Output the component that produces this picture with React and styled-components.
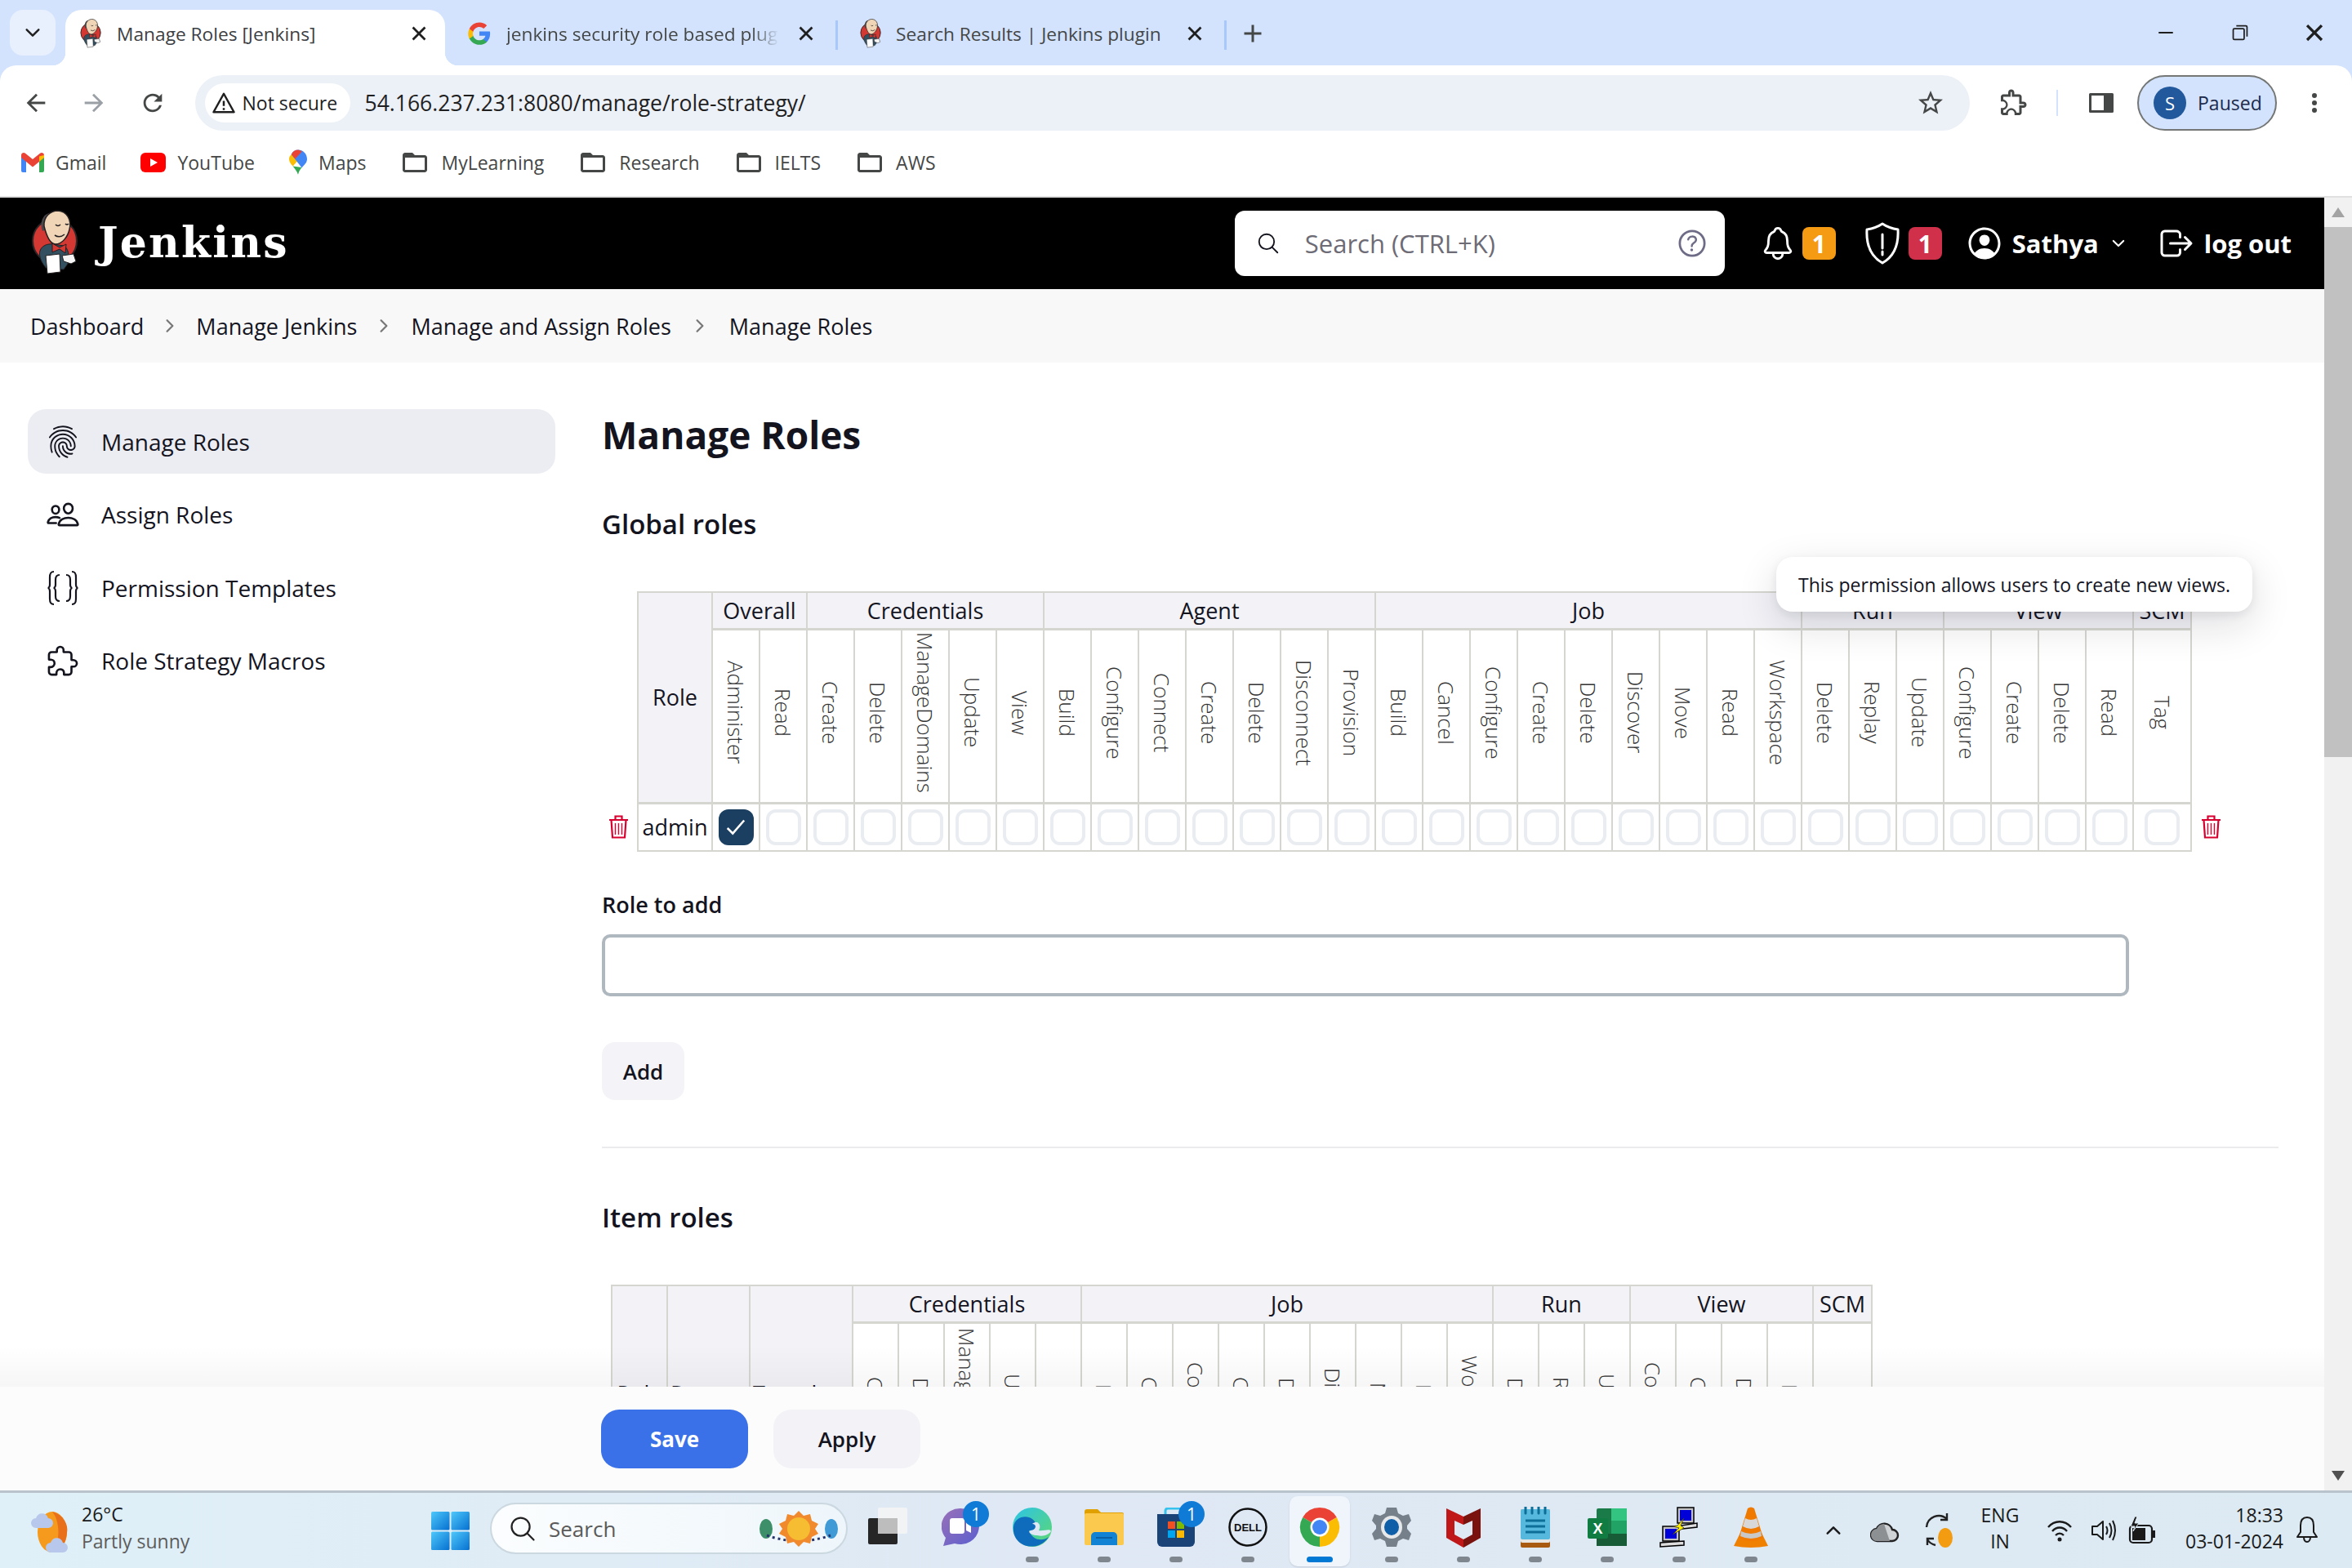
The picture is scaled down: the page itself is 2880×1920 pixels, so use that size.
import React from "react";
import styled, { createGlobalStyle } from "styled-components";
import {
  IoNotificationsOutline,
  IoPersonCircleOutline,
  IoLogOutOutline,
  IoFingerPrintOutline,
  IoPeopleOutline,
  IoExtensionPuzzleOutline,
  IoSearchOutline,
  IoHelpCircleOutline,
  IoChevronDownOutline,
  IoChevronForwardOutline,
  IoCheckmarkSharp,
  IoCloseSharp,
} from "react-icons/io5";

const UI = `"Open Sans", "Noto Sans", sans-serif`;

const GlobalStyle = createGlobalStyle`
   html, body {
      margin: 0;
      padding: 0;
      background: #fff;
      font-family: ${UI};
      color: #14141f;
   }
   * { box-sizing: border-box; }
`;

const Shell = styled.div`
   width: 2880px;
   height: 1920px;
   display: flex;
   flex-direction: column;
   overflow: hidden;
`;

/* browser chrome */
const ChromeTop = styled.div`
   background: #d3e3fd;
`;

const TabStrip = styled.div`
   height: 80px;
   display: flex;
   align-items: flex-end;
`;

const TabListBtn = styled.div`
   width: 56px;
   height: 56px;
   margin: 0 12px 12px 12px;
   border-radius: 16px;
   background: #e8f0fe;
   display: flex;
   align-items: center;
   justify-content: center;
   color: #1f1f1f;
`;

const ActiveTab = styled.div`
   position: relative;
   width: 465px;
   height: 68px;
   background: #fff;
   border-radius: 20px 20px 0 0;
   display: flex;
   align-items: center;
   padding: 0 13px 10px 18px;
   gap: 19px;
   font-size: 22.7px;
   color: #3c4043;
   &::before,
   &::after {
      content: "";
      position: absolute;
      bottom: 0;
      width: 16px;
      height: 16px;
   }
   &::before {
      left: -16px;
      background: radial-gradient(circle at 0 0, #d3e3fd 16px, #fff 16.5px);
   }
   &::after {
      right: -16px;
      background: radial-gradient(circle at 100% 0, #d3e3fd 16px, #fff 16.5px);
   }
`;

const Tab = styled.div`
   width: ${(p) => p.$w}px;
   height: 68px;
   display: flex;
   align-items: center;
   padding: 0 17px 10px 27px;
   gap: 18px;
   font-size: 22.7px;
   color: #444746;
   border-right: 3px solid #a8c7fa;
   border-image: linear-gradient(transparent 20%, #a8c7fa 20%, #a8c7fa 72%, transparent 72%) 1;
`;

const TabTitle = styled.span`
   flex: 1;
   white-space: nowrap;
   overflow: hidden;
   -webkit-mask-image: ${(p) => (p.$fade ? "linear-gradient(90deg, #000 90%, transparent)" : "none")};
`;

const TabClose = styled.span`
   display: flex;
   color: #1f1f1f;
   font-size: 30px;
   margin-right: 4px;
`;

const NewTab = styled.span`
   display: flex;
   align-items: center;
   height: 68px;
   padding-bottom: 10px;
   margin-left: 14px;
   color: #444746;
`;

const WindowBtns = styled.div`
   margin-left: auto;
   margin-right: 1px;
   height: 80px;
   display: flex;
   align-items: center;
   color: #1f1f1f;
`;

const WindowBtn = styled.span`
   width: 91px;
   display: flex;
   justify-content: center;
   align-items: center;
`;

const Toolbar = styled.div`
   height: 80px;
   background: #fff;
   border-radius: 20px 20px 0 0;
   display: flex;
   align-items: flex-end;
   padding-left: 8px;
`;

const NavBtn = styled.span`
   width: 72px;
   height: 68px;
   display: flex;
   align-items: center;
   justify-content: center;
`;

const Omnibox = styled.div`
   width: 2188px;
   height: 68px;
   margin-left: 16px;
   background: #ecf0f7;
   border-radius: 34px;
   display: flex;
   align-items: center;
   padding: 0 30px 0 12px;
`;

const SecureChip = styled.div`
   width: 178px;
   height: 48px;
   background: #fff;
   border-radius: 24px;
   display: flex;
   align-items: center;
   gap: 8px;
   padding-left: 8px;
   font-size: 23px;
   font-weight: 500;
   color: #1f1f1f;
   white-space: nowrap;
`;

const Url = styled.span`
   margin-left: 18px;
   font-size: 26.5px;
   color: #1f1f1f;
   flex: 1;
   white-space: nowrap;
`;

const ToolIcons = styled.div`
   display: flex;
   align-items: center;
   height: 68px;
`;

const ToolIcon = styled.span`
   width: ${(p) => p.$w}px;
   display: flex;
   justify-content: center;
   align-items: center;
`;

const ToolSep = styled.span`
   width: 2px;
   height: 32px;
   background: #d3e3fd;
`;

const ProfilePill = styled.div`
   width: 172px;
   height: 68px;
   margin-left: -9px;
   border-radius: 34px;
   border: 2px solid #747775;
   background: #d3e3fd;
   display: flex;
   align-items: center;
   gap: 14px;
   padding-left: 18px;
   font-size: 23px;
   color: #1b2a4a;
`;

const Avatar = styled.span`
   width: 40px;
   height: 40px;
   border-radius: 50%;
   background: #22589c;
   color: #fff;
   font-size: 22px;
   display: flex;
   align-items: center;
   justify-content: center;
`;

const Bookmarks = styled.div`
   height: 82px;
   background: #fff;
   border-bottom: 2px solid #e0e0e0;
   display: flex;
   align-items: center;
   padding: 0 0 3px 26px;
   gap: 42px;
`;

const Bookmark = styled.div`
   display: flex;
   align-items: center;
   gap: 14px;
   font-size: 23px;
   color: #444746;
`;

/* page area */
const Viewport = styled.div`
   flex: 1;
   min-height: 0;
   display: flex;
   background: #fff;
`;

const Page = styled.div`
   position: relative;
   flex: 1;
   min-width: 0;
   overflow: hidden;
`;

const Scrollbar = styled.div`
   width: 34px;
   background: #f1f1f1;
   display: flex;
   flex-direction: column;
   align-items: center;
`;

const ScrollArrow = styled.span`
   width: 0;
   height: 0;
   border-left: 8px solid transparent;
   border-right: 8px solid transparent;
   margin: 12px 0;
   border-bottom: ${(p) => (p.$down ? "none" : "12px solid #a3a3a3")};
   border-top: ${(p) => (p.$down ? "12px solid #505050" : "none")};
`;

const ScrollThumb = styled.div`
   width: 100%;
   height: 649px;
   background: #c1c1c1;
`;

const ScrollRest = styled.div`
   flex: 1;
`;

const JenkinsBar = styled.header`
   height: 112px;
   background: #000;
   display: flex;
   align-items: center;
   padding: 0 40px 0 38px;
   color: #fff;
`;

const Brand = styled.div`
   display: flex;
   align-items: center;
   gap: 24px;
   font-family: "DejaVu Serif", "Liberation Serif", serif;
   font-weight: 700;
   font-size: 52px;
   line-height: 60px;
   letter-spacing: 2.2px;
   padding-bottom: 3px;
`;

const SearchBox = styled.div`
   margin-left: auto;
   width: 600px;
   height: 80px;
   border-radius: 12px;
   background: #fff;
   display: flex;
   align-items: center;
   padding: 0 18px 0 26px;
   color: #14141f;
`;

const SearchText = styled.span`
   flex: 1;
   margin-left: 30px;
   font-size: 31px;
   color: #6d6b75;
`;

const HeaderGroup = styled.div`
   display: flex;
   align-items: center;
   margin-left: ${(p) => p.$ml}px;
   gap: ${(p) => p.$gap || 10}px;
   font-size: 31px;
   font-weight: 700;
   white-space: nowrap;
`;

const ChevronSlot = styled.span`
   display: flex;
   margin-left: 3px;
`;

const CountBadge = styled.span`
   width: 41px;
   height: 40px;
   border-radius: 8px;
   background: ${(p) => p.$bg};
   display: flex;
   align-items: center;
   justify-content: center;
   font-size: 30px;
   font-weight: 700;
   color: #fff;
`;

const Breadcrumbs = styled.nav`
   height: 90px;
   background: #f8f8f8;
   display: flex;
   align-items: center;
   padding-left: 37px;
   font-size: 27px;
   font-weight: 500;
`;

const CrumbSep = styled.span`
   width: ${(p) => p.$w}px;
   display: flex;
   justify-content: center;
   color: #777;
`;

const Body = styled.div`
   display: flex;
   padding: 57px 0 0 34px;
`;

const Sidebar = styled.aside`
   width: 646px;
   flex-shrink: 0;
   display: flex;
   flex-direction: column;
   gap: 10.5px;
`;

const SideItem = styled.div`
   height: 79px;
   border-radius: 22px;
   display: flex;
   align-items: center;
   gap: 26px;
   padding-left: 22px;
   font-size: 28px;
   font-weight: 500;
   background: ${(p) => (p.$active ? "#ecedf2" : "transparent")};
`;

const Main = styled.main`
   margin-left: 57px;
   width: 2053px;
`;

const Title = styled.h1`
   margin: 0;
   font-size: 46px;
   line-height: 62px;
   font-weight: 700;
`;

const SectionTitle = styled.h2`
   margin: ${(p) => p.$mt}px 0 0;
   font-size: 33px;
   line-height: 48px;
   font-weight: 600;
`;

const RoleTable = styled.table`
   margin: 58px 0 0 ${(p) => p.$left || 0}px;
   border-collapse: collapse;
   table-layout: fixed;
   font-size: 27px;
`;

const GroupCell = styled.th`
   height: 45px;
   padding: 0;
   background: #f2f2f7;
   border: 2px solid #d6d6d0;
   font-weight: 400;
   white-space: nowrap;
   overflow: hidden;
`;

const PermCell = styled.th`
   height: ${(p) => p.$h}px;
   padding: 0;
   background: #fff;
   border: 2px solid #d6d6d0;
   border-top-width: 3px;
   font-weight: 300;
   vertical-align: middle;
`;

const PermLabel = styled.span`
   display: inline-block;
   writing-mode: vertical-rl;
   white-space: nowrap;
   font-size: 26px;
   line-height: 30px;
   color: #333;
`;

const NoBorderCell = styled.td`
   padding: 0;
   border: none;
`;

const NameCell = styled.td`
   height: 59px;
   padding: 0;
   text-align: center;
   border: 2px solid #d6d6d0;
   border-top-width: 3px;
   font-size: 27px;
`;

const CheckCell = styled.td`
   height: 59px;
   padding: 0;
   border: 2px solid #d6d6d0;
   border-top-width: 3px;
`;

const Checkbox = styled.span`
   display: flex;
   align-items: center;
   justify-content: center;
   width: 43px;
   height: 44px;
   margin: 0 auto;
   border-radius: 12px;
   border: ${(p) => (p.$checked ? "none" : "4px solid #e9ecf0")};
   background: ${(p) => (p.$checked ? "#1b3f60" : "#fff")};
   color: #fff;
`;

const TrashWrap = styled.span`
   display: flex;
   padding-left: ${(p) => (p.$right ? 11 : 8)}px;
`;

const FieldLabel = styled.label`
   display: block;
   margin-top: 46px;
   font-size: 27px;
   line-height: 38px;
   font-weight: 600;
`;

const TextInput = styled.input`
   display: block;
   width: 1870px;
   height: 76px;
   margin-top: 17px;
   border: 4px solid #b0b8bf;
   border-radius: 10px;
   background: #fff;
   outline: none;
`;

const AddButton = styled.button`
   display: block;
   width: 101px;
   height: 71px;
   margin-top: 56px;
   border: none;
   border-radius: 16px;
   background: #f4f4f8;
   font: 600 26px ${UI};
   color: #14141f;
`;

const Divider = styled.hr`
   margin: 57px 0 0;
   border: none;
   height: 2px;
   background: #ebebee;
`;

const Tooltip = styled.div`
   position: absolute;
   left: 2175px;
   top: 440px;
   width: 583px;
   height: 67px;
   display: flex;
   align-items: center;
   justify-content: center;
   background: #fff;
   border-radius: 20px;
   box-shadow: 0 4px 12px rgba(20, 20, 40, 0.08), 0 16px 50px rgba(20, 20, 40, 0.14);
   font-size: 23px;
   white-space: nowrap;
`;

const SaveBar = styled.div`
   position: absolute;
   left: 0;
   right: 0;
   bottom: 0;
   height: 127px;
   padding: 28px 0 0 736px;
   display: flex;
   gap: 31px;
   background: #fcfcfc;
   &::before {
      content: "";
      position: absolute;
      left: 0;
      right: 0;
      top: -50px;
      height: 50px;
      background: linear-gradient(rgba(0, 0, 0, 0), rgba(0, 0, 0, 0.035));
   }
`;

const BarButton = styled.button`
   width: 180px;
   height: 72px;
   border: none;
   border-radius: 22px;
   background: ${(p) => (p.$primary ? "#3a70e8" : "#f3f3f7")};
   color: ${(p) => (p.$primary ? "#fff" : "#14141f")};
   font: ${(p) => (p.$primary ? 700 : 600)} 26px ${UI};
`;

/* taskbar */
const Taskbar = styled.footer`
   height: 95px;
   flex-shrink: 0;
   border-top: 3px solid #b8c3cb;
   background: linear-gradient(90deg, #dff0f8, #dfe8f4 45%, #dceaf3);
   display: flex;
   align-items: center;
`;

const Weather = styled.div`
   width: 528px;
   flex-shrink: 0;
   padding-left: 38px;
   display: flex;
   align-items: center;
   gap: 14px;
`;

const WeatherText = styled.div`
   font-size: 23px;
   line-height: 33px;
   margin-bottom: 6px;
   color: #1a1a1a;
`;

const WeatherSub = styled.div`
   color: #5c5c5c;
`;

const TaskSearch = styled.div`
   width: 438px;
   height: 63px;
   margin: 0 0 5px 25px;
   border-radius: 32px;
   background: linear-gradient(90deg, #fbfdfe, #eef6fb);
   border: 2px solid #cbd8e0;
   display: flex;
   align-items: center;
   padding: 0 8px 0 20px;
   gap: 14px;
   font-size: 26px;
   color: #5a5a5a;
`;

const TaskSearchText = styled.span`
   flex: 1;
`;

const TaskIcons = styled.div`
   margin-left: 6px;
   display: flex;
   flex-shrink: 0;
`;

const TaskIcon = styled.div`
   position: relative;
   width: 88px;
   height: 92px;
   display: flex;
   align-items: center;
   justify-content: center;
   padding-bottom: 8px;
   &::before {
      content: "";
      position: absolute;
      inset: 4px 7px 2px;
      border-radius: 10px;
      background: ${(p) => (p.$active ? "#f0f5fb" : "transparent")};
      box-shadow: ${(p) => (p.$active ? "0 1px 2px rgba(0,0,0,.12)" : "none")};
   }
   &::after {
      content: "";
      display: ${(p) => (p.$dot || p.$active ? "block" : "none")};
      position: absolute;
      bottom: 7px;
      left: 50%;
      transform: translateX(-50%);
      width: ${(p) => (p.$active ? 32 : 16)}px;
      height: 7px;
      border-radius: 4px;
      background: ${(p) => (p.$active ? "#0078d4" : "#7f868e")};
   }
   & > svg {
      position: relative;
   }
`;

const TaskBadge = styled.span`
   position: absolute;
   top: 10px;
   left: 47px;
   width: 32px;
   height: 32px;
   border-radius: 50%;
   background: #0f7bd6;
   color: #fff;
   font-size: 21px;
   display: flex;
   align-items: center;
   justify-content: center;
`;

const Tray = styled.div`
   margin-left: 25px;
   display: flex;
   align-items: center;
   color: #1a1a1a;
`;

const TraySlot = styled.div`
   width: ${(p) => p.$w}px;
   display: flex;
   flex-direction: column;
   align-items: ${(p) => p.$align || "center"};
   justify-content: center;
   font-size: 23px;
   line-height: 32px;
   margin-bottom: ${(p) => (p.$text ? 6 : 0)}px;
   white-space: nowrap;
`;

/* drawn icons */
const Mat = ({ d, size = 32, color = "#444746" }) => (
   <svg width={size} height={size} viewBox="0 0 24 24" fill={color}>
      <path d={d} />
   </svg>
);

const Butler = ({ h = 80 }) => (
   <svg width={(h * 58) / 80} height={h} viewBox="0 0 58 80">
      <circle cx="29" cy="38" r="27" fill="#d33833" stroke="#2a2627" strokeWidth="2" />
      <path d="M11 50C13 44 20 41 27 42L40 44C46 47 47 56 45 66L40 73L19 72C13 65 9 57 11 50Z" fill="#335061" stroke="#231f20" />
      <path d="M14 26C10 15 15 5 23 4L18 24Z" fill="#49484a" />
      <path d="M16 20C15 8 24 1 33 1C44 2 50 12 47 24C45 33 38 42 30 42C23 42 19 32 16 20Z" fill="#f0d6b7" stroke="#231f20" strokeWidth="1.5" />
      <path d="M30 18q3 3 6 0M42 17q2 2 4 0M29 31q6 4 12-1" fill="none" stroke="#231f20" strokeWidth="1.6" />
      <path d="M26 41L35 46L43 42L42 53L35 48L26 52Z" fill="#d33833" stroke="#231f20" />
      <path d="M18 56L35 54L36 76L20 78Z" fill="#fff" stroke="#231f20" />
      <path d="M38 56L52 54L55 63L49 66L40 63Z" fill="#f5f5f5" stroke="#231f20" />
   </svg>
);

const GoogleG = () => (
   <svg width="30" height="30" viewBox="0 0 48 48">
      <path fill="#4285f4" d="M45 24.5c0-1.6-.1-3.1-.4-4.5H24v8.5h11.8c-.5 2.700-2.100 5-4.400 6.600v5.500h7.100C42.600 36.800 45 31.200 45 24.500z" />
      <path fill="#34a853" d="M24 46c5.900 0 10.900-2 14.500-5.400l-7.100-5.500c-2 1.300-4.500 2.100-7.400 2.100-5.700 0-10.500-3.800-12.200-9H4.400v5.700C8 41 15.400 46 24 46z" />
      <path fill="#fbbc05" d="M11.800 28.700c-.4-1.300-.7-2.700-.7-4.200s.3-2.900.7-4.200v-5.700H4.400C2.900 17.600 2 21 2 24.500s.9 6.900 2.400 9.900z" />
      <path fill="#ea4335" d="M24 11.200c3.200 0 6.100 1.100 8.400 3.300l6.300-6.300C34.900 4.600 29.900 2.500 24 2.500 15.400 2.500 8 7.500 4.400 14.600l7.400 5.700c1.700-5.200 6.500-9.100 12.200-9.100z" />
   </svg>
);

const WarnIcon = () => (
   <svg width="30" height="30" viewBox="0 0 24 24" fill="none" stroke="#1f1f1f" strokeWidth="2">
      <path d="M12 3L22 21H2Z" strokeLinejoin="round" />
      <path d="M12 10v5M12 17v2" />
   </svg>
);

const GmailIcon = () => (
   <svg width="28" height="24" viewBox="0 0 28 24">
      <path fill="#4285f4" d="M0 6h6v18H2a2 2 0 0 1-2-2z" />
      <path fill="#34a853" d="M22 6h6v16a2 2 0 0 1-2 2h-4z" />
      <path fill="#ea4335" d="M0 3C0 .5 3-.8 5 .7L14 8l9-7.300C25-.8 28 .5 28 3v3l-6 5-8 6.500L6 11 0 6z" />
      <path fill="#fbbc04" d="M22 4.500L28 3v3l-6 5z" />
   </svg>
);

const YouTubeIcon = () => (
   <svg width="31" height="24" viewBox="0 0 31 24">
      <rect width="31" height="24" rx="6" fill="#f00" />
      <path d="M12 7l9 5-9 5z" fill="#fff" />
   </svg>
);

const MapsIcon = () => (
   <svg width="22" height="33" viewBox="0 0 24 33">
      <path fill="#34a853" d="M5 22c2.500 3.500 5.500 6.500 7 11 1-4 3-7 5-9.500z" />
      <path fill="#fbbc04" d="M3 6C1 8 0 10 0 12.500c0 4 2.500 6.500 5 9.500l8-9z" />
      <path fill="#4285f4" d="M12 0c-3.500 0-7 2-9 6l14 18c3.500-4 7-6.500 7-11.500C24 5 18.500 0 12 0z" />
      <path fill="#ea4335" d="M12 0C8.500 0 5 2 3 6l5 6 9-9.500C15.500 1 14 0 12 0z" />
   </svg>
);

const ShieldAlert = () => (
   <svg width="44" height="54" viewBox="0 0 44 54" fill="none" stroke="#fff" strokeWidth="3">
      <path d="M22 3C28 7 34 9 41 10C42 28 36 43 22 51C8 43 2 28 3 10C10 9 16 7 22 3Z" strokeLinejoin="round" />
      <path d="M22 16V33M22 37V41" strokeLinecap="round" />
   </svg>
);

const BracesIcon = () => (
   <svg width="42" height="44" viewBox="0 0 42 44" fill="none" stroke="#14141f" strokeWidth="2.200">
      <path d="M10 2C6 2 5 4 5 9V18C5 20 4 22 2.500 22C4 22 5 24 5 26V35C5 40 6 42 10 42" />
      <path d="M17 6C13 6 12 8 12 12V18C12 20 11 22 9.500 22C11 22 12 24 12 26V32C12 36 13 38 17 38" />
      <path d="M25 6C29 6 30 8 30 12V18C30 20 31 22 32.500 22C31 22 30 24 30 26V32C30 36 29 38 25 38" />
      <path d="M32 2C36 2 37 4 37 9V18C37 20 38 22 39.500 22C38 22 37 24 37 26V35C37 40 36 42 32 42" />
   </svg>
);

const TrashIcon = () => (
   <svg width="25" height="29" viewBox="0 0 25 29" fill="none" stroke="#d8002e" strokeWidth="2.200">
      <path d="M1 6H24M8.500 6V1.500H16.500V6M3.500 6L5 27.500H20L21.500 6" />
      <path d="M8.500 10V24M12.500 10V24M16.500 10V24" strokeWidth="1.400" />
   </svg>
);

const WeatherIcon = () => (
   <svg width="48" height="58" viewBox="0 0 48 58">
      <ellipse cx="26" cy="31" rx="18" ry="25" fill="#f59a1c" />
      <path d="M26 6C40 10 46 22 44 32C43 46 34 56 26 56C36 44 36 18 26 6Z" fill="#e8701a" />
      <path d="M6 26a6 6 0 0 1 0-12 8 9 0 0 1 15 0 6 6 0 0 1 0 12Z" fill="#b7c8ec" />
      <path d="M24 56a6 6 0 0 1 0-12 8 9 0 0 1 15 0 6 6 0 0 1 0 12Z" fill="#b7c8ec" />
   </svg>
);

const WinLogo = () => (
   <svg width="47" height="47" viewBox="0 0 47 47" style={{ flexShrink: 0 }}>
      <defs>
         <linearGradient id="winG" x1="0" y1="0" x2="1" y2="1">
            <stop offset="0" stopColor="#4ec8fb" />
            <stop offset="1" stopColor="#0670d0" />
         </linearGradient>
      </defs>
      <rect width="22.500" height="22.500" rx="1.500" fill="url(#winG)" />
      <rect x="24.500" width="22.500" height="22.500" rx="1.500" fill="url(#winG)" />
      <rect y="24.500" width="22.500" height="22.500" rx="1.500" fill="url(#winG)" />
      <rect x="24.500" y="24.500" width="22.500" height="22.500" rx="1.500" fill="url(#winG)" />
   </svg>
);

const SearchArt = () => (
   <svg width="100" height="48" viewBox="0 0 100 48">
      <ellipse cx="10" cy="24" rx="8" ry="12" fill="#3d8f6a" />
      <ellipse cx="90" cy="24" rx="8" ry="12" fill="#3f9ad6" />
      <path d="M11 32Q50 46 89 32" fill="none" stroke="#27346b" strokeWidth="3" strokeDasharray="3 4" />
      <path d="M50 2l6 6 8-2 2 8 8 4-4 6 4 6-8 4-2 8-8-2-6 6-6-6-8 2-2-8-8-4 4-6-4-6 8-4 2-8 8 2Z" fill="#f08a2c" />
      <circle cx="50" cy="24" r="14" fill="#f6bc32" />
   </svg>
);

const StackIcon = () => (
   <svg width="50" height="48" viewBox="0 0 50 48">
      <rect x="0" y="13" width="36" height="32" rx="2" fill="#262626" />
      <rect x="12" y="0" width="36" height="32" rx="2" fill="#f4f4f4" opacity=".85" />
      <rect x="12" y="13" width="24" height="19" fill="#bdbdbd" />
   </svg>
);

const ChatIcon = () => (
   <svg width="46" height="46" viewBox="0 0 46 46">
      <defs>
         <linearGradient id="chatG" x1="0" y1="0" x2="1" y2="1">
            <stop offset="0" stopColor="#9a70b8" />
            <stop offset="1" stopColor="#5a5fcf" />
         </linearGradient>
      </defs>
      <path d="M23 0a23 22 0 1 1-7 43L2 46l3-10A23 22 0 0 1 23 0Z" fill="url(#chatG)" />
      <rect x="10" y="12" width="18" height="19" rx="3" fill="#fff" />
      <path d="M30 16l6-3v17l-6-3Z" fill="#fff" />
   </svg>
);

const EdgeIcon = () => (
   <svg width="48" height="48" viewBox="0 0 48 48">
      <defs>
         <linearGradient id="edgeA" x1="0" y1="0" x2="1" y2="1">
            <stop offset="0" stopColor="#2cc4e8" />
            <stop offset="1" stopColor="#5fd86e" />
         </linearGradient>
      </defs>
      <circle cx="24" cy="24" r="24" fill="url(#edgeA)" />
      <path d="M1 24C2 12 16 8 24 14C32 20 28 30 20 28C24 40 36 42 44 36C38 46 26 50 14 46C5 42 0 34 1 24Z" fill="#0f6cbd" />
      <path d="M24 20C30 20 29 28 22 28C17 30 24 34 30 34C38 36 44 33 47 29C46 25 38 29 32 28C36 20 30 15 24 20Z" fill="#dfe8f4" />
   </svg>
);

const FolderIcon = () => (
   <svg width="48" height="44" viewBox="0 0 48 44">
      <path d="M0 3a3 3 0 0 1 3-3h13l4 4h26a2 2 0 0 1 2 2v4H0Z" fill="#e0a000" />
      <rect y="5" width="48" height="39" rx="2" fill="#fbc94e" />
      <path d="M8 44V33a5 5 0 0 1 5-5h22a5 5 0 0 1 5 5v11Z" fill="#1283d4" />
      <rect x="14" y="34" width="20" height="2" fill="#0b5fa5" />
   </svg>
);

const StoreIcon = () => (
   <svg width="46" height="48" viewBox="0 0 46 48">
      <path d="M0 8h46v34a6 6 0 0 1-6 6H6a6 6 0 0 1-6-6Z" fill="#1a4378" />
      <path d="M10 8V4a3 3 0 0 1 3-3h20a3 3 0 0 1 3 3v4" fill="none" stroke="#35c3ee" strokeWidth="3" />
      <rect x="13" y="17" width="9" height="9" fill="#f25022" />
      <rect x="24" y="17" width="9" height="9" fill="#7fba00" />
      <rect x="13" y="28" width="9" height="9" fill="#00a4ef" />
      <rect x="24" y="28" width="9" height="9" fill="#ffb900" />
   </svg>
);

const DellIcon = () => (
   <svg width="48" height="48" viewBox="0 0 48 48">
      <circle cx="24" cy="24" r="22.500" fill="none" stroke="#111" strokeWidth="2.500" />
      <text x="24" y="28.500" textAnchor="middle" fontFamily="Liberation Sans" fontWeight="700" fontSize="13" fill="#111">DELL</text>
   </svg>
);

const ChromeIcon = () => (
   <svg width="50" height="50" viewBox="0 0 50 50">
      <path d="M25 25L4.200 13A24 24 0 0 1 45.800 13Z" fill="#ea4335" />
      <path d="M25 25L45.800 13A24 24 0 0 1 25 49Z" fill="#fbbc04" />
      <path d="M25 25L25 49A24 24 0 0 1 4.200 13Z" fill="#34a853" />
      <circle cx="25" cy="25" r="11.500" fill="#fff" />
      <circle cx="25" cy="25" r="9" fill="#4285f4" />
   </svg>
);

const GearIcon = () => (
   <svg width="48" height="50" viewBox="0 0 48 50">
      <path d="M18 1h12l2 7 6 3 7-2 3 8-5 6v4l5 6-3 8-7-2-6 3-2 7H18l-2-7-6-3-7 2-3-8 5-6v-4L0 17l3-8 7 2 6-3Z" fill="#76808b" />
      <ellipse cx="24" cy="25" rx="13" ry="14" fill="#e6e8ea" />
      <ellipse cx="24" cy="25" rx="9" ry="10" fill="#0f5ea8" />
   </svg>
);

const McAfeeIcon = () => (
   <svg width="42" height="50" viewBox="0 0 42 50">
      <path d="M0 2l21 10V22L10 17V34L21 40V50L0 38Z" fill="#c01818" />
      <path d="M42 2L21 12V22L32 17V34L21 40V50L42 38Z" fill="#7a120e" />
   </svg>
);

const NotepadIcon = () => (
   <svg width="36" height="50" viewBox="0 0 36 50">
      <rect y="3" width="36" height="47" rx="2" fill="#a85a10" />
      <rect y="3" width="36" height="41" rx="2" fill="#e8e6e2" />
      <rect y="3" width="36" height="37" rx="2" fill="#55b8dc" />
      <path d="M6 0v8M14 0v8M22 0v8M30 0v8" stroke="#0d6e98" strokeWidth="3" strokeLinecap="round" />
      <path d="M6 17h24M6 24h24M6 31h24" stroke="#0d6e98" strokeWidth="3" />
   </svg>
);

const ExcelIcon = () => (
   <svg width="48" height="46" viewBox="0 0 48 46">
      <rect x="11" width="37" height="46" rx="2" fill="#1a7a48" />
      <rect x="29" width="19" height="15" fill="#33c481" />
      <rect x="29" y="15" width="19" height="16" fill="#21a366" />
      <rect x="11" y="31" width="37" height="15" fill="#185c37" />
      <rect y="12" width="25" height="25" rx="2" fill="#107c41" />
      <text x="12.500" y="31" textAnchor="middle" fontFamily="Liberation Sans" fontWeight="700" fontSize="18" fill="#fff">X</text>
   </svg>
);

const PuttyIcon = () => (
   <svg width="48" height="50" viewBox="0 0 48 50">
      <rect x="22" y="1" width="20" height="19" fill="#c4c4c4" stroke="#000" strokeWidth="1.500" />
      <rect x="25" y="4" width="14" height="13" fill="#0000d8" />
      <path d="M20 24L46 20V25L20 28Z" fill="#ddd" stroke="#000" strokeWidth="1.500" />
      <rect x="4" y="24" width="20" height="18" fill="#c4c4c4" stroke="#000" strokeWidth="1.500" />
      <rect x="7" y="27" width="14" height="12" fill="#0000d8" />
      <path d="M1 44L30 42V47L1 49Z" fill="#ddd" stroke="#000" strokeWidth="1.500" />
      <path d="M30 14L22 23L16 24L24 26L16 34L30 26L26 23Z" fill="#ffee00" stroke="#333" strokeWidth=".8" />
   </svg>
);

const VlcIcon = () => (
   <svg width="42" height="50" viewBox="0 0 42 50">
      <path d="M0 48L8 32H34L42 48Q21 52 0 48Z" fill="#f08000" />
      <path d="M17 2Q21-1 25 2L36 38Q21 46 6 38Z" fill="#f07a00" />
      <path d="M14 14Q21 18 28 14L31 24Q21 30 11 24Z" fill="#d8d8d8" />
      <path d="M9 30Q21 36 33 30L34 36Q21 42 8 36Z" fill="#c8c8c8" />
   </svg>
);

const CloudIcon = () => (
   <svg width="36" height="30" viewBox="0 0 36 30" fill="none" stroke="#222" strokeWidth="2.400">
      <path d="M9 28a7.500 7.500 0 0 1-1-15 10 10 0 0 1 19 1 7 7 0 0 1 0 14Z" fill="#cfd2d4" />
      <path d="M9 28a7.500 7.500 0 0 1-1-15 10 10 0 0 1 9-6L24 28Z" fill="#8d9093" stroke="none" />
   </svg>
);

const SyncIcon = () => (
   <svg width="40" height="44" viewBox="0 0 40 44" fill="none" stroke="#222" strokeWidth="2.400">
      <path d="M5 18A15 15 0 0 1 30 8M30 1V9H22" />
      <path d="M6 40V32H14M6 33A15 15 0 0 0 16 40" />
      <ellipse cx="28" cy="31" rx="9" ry="12" fill="#f39c12" stroke="none" />
   </svg>
);

const WifiIcon = () => (
   <svg width="32" height="30" viewBox="0 0 32 30" fill="none" stroke="#1a1a1a" strokeWidth="2.400">
      <path d="M2 11C10 2 22 2 30 11M7 16C12 10 20 10 25 16M11 21C14 18 18 18 21 21" />
      <circle cx="16" cy="26" r="2.500" fill="#1a1a1a" stroke="none" />
   </svg>
);

const SpeakerIcon = () => (
   <svg width="32" height="30" viewBox="0 0 32 30" fill="none" stroke="#1a1a1a" strokeWidth="2">
      <path d="M2 10H8L15 4V26L8 20H2Z" strokeLinejoin="round" />
      <path d="M19 10Q22 15 19 20M23 6Q28 15 23 24M27 3Q33 15 27 27" />
   </svg>
);

const BatteryIcon = () => (
   <svg width="34" height="34" viewBox="0 0 34 34">
      <rect x="2" y="11" width="27" height="21" rx="4" fill="none" stroke="#1a1a1a" strokeWidth="2.200" />
      <rect x="5" y="14" width="16" height="15" fill="#1a1a1a" />
      <rect x="29" y="17" width="4" height="9" fill="#1a1a1a" />
      <path d="M8 0L3 12H8L6 18L13 8H8L11 0Z" fill="#1a1a1a" stroke="#dfeaf3" strokeWidth="1" />
   </svg>
);

const TrayBell = () => (
   <svg width="28" height="36" viewBox="0 0 28 36" fill="none" stroke="#1a1a1a" strokeWidth="2">
      <path d="M14 2C8 2 6 7 6 12V20L2 26H26L22 20V12C22 7 20 2 14 2ZM10 26C10 34 18 34 18 26" strokeLinejoin="round" />
   </svg>
);

/* table data */
const GLOBAL_GROUPS = [
   ["Overall", ["Administer", "Read"]],
   ["Credentials", ["Create", "Delete", "ManageDomains", "Update", "View"]],
   ["Agent", ["Build", "Configure", "Connect", "Create", "Delete", "Disconnect", "Provision"]],
   ["Job", ["Build", "Cancel", "Configure", "Create", "Delete", "Discover", "Move", "Read", "Workspace"]],
   ["Run", ["Delete", "Replay", "Update"]],
   ["View", ["Configure", "Create", "Delete", "Read"]],
   ["SCM", ["Tag"]],
];

const ITEM_GROUPS = GLOBAL_GROUPS.filter(([name]) => name !== "Overall" && name !== "Agent");

const flatPerms = (groups) => groups.flatMap(([, perms]) => perms);

const GLOBAL_PERMS = flatPerms(GLOBAL_GROUPS);
const ITEM_PERMS = flatPerms(ITEM_GROUPS);

const MD_PATHS = {
   back: "M20 11H7.830l5.590-5.590L12 4l-8 8 8 8 1.410-1.410L7.830 13H20v-2z",
   forward: "M12 4l-1.410 1.410L16.170 11H4v2h12.170l-5.580 5.590L12 20l8-8z",
   reload: "M17.650 6.350A7.958 7.958 0 0 0 12 4c-4.420 0-7.990 3.580-7.990 8s3.570 8 7.990 8c3.730 0 6.840-2.550 7.730-6h-2.080A5.990 5.990 0 0 1 12 18c-3.310 0-6-2.690-6-6s2.690-6 6-6c1.660 0 3.140.690 4.220 1.780L13 11h7V4l-2.350 2.350z",
   star: "M22 9.240l-7.190-.620L12 2 9.190 8.630 2 9.240l5.460 4.730L5.820 21 12 17.270 18.180 21l-1.630-7.030L22 9.240zM12 15.400l-3.760 2.270 1-4.280-3.320-2.880 4.380-.380L12 6.100l1.710 4.040 4.380.380-3.320 2.880 1 4.280L12 15.400z",
   folder: "M20 6h-8l-2-2H4c-1.100 0-1.990.9-1.990 2L2 18c0 1.100.9 2 2 2h16c1.100 0 2-.9 2-2V8c0-1.100-.9-2-2-2zm0 12H4V8h16v10z",
   puzzle: "M20.500 11H19V7c0-1.100-.9-2-2-2h-4V3.500C13 2.120 11.880 1 10.500 1S8 2.120 8 3.500V5H4c-1.100 0-1.990.9-1.990 2v3.800H3.500c1.490 0 2.700 1.210 2.700 2.700s-1.210 2.700-2.700 2.700H2V20c0 1.100.9 2 2 2h3.800v-1.500c0-1.490 1.210-2.700 2.700-2.700s2.700 1.210 2.700 2.700V22H17c1.100 0 2-.9 2-2v-4h1.500c1.380 0 2.500-1.120 2.500-2.500S21.880 11 20.500 11zm0 3H17v6h-2.100c-.5-2-2.300-3.700-4.400-3.700S6.600 18 6.100 20H4v-2.100c2-.5 3.700-2.300 3.700-4.400S6 9.600 4 9.100V7h6V3.500a.5.5 0 0 1 1 0V7h6v6h3.500a.5.5 0 0 1 0 1z",
   panel: "M3 4h18a1 1 0 0 1 1 1v14a1 1 0 0 1-1 1H3a1 1 0 0 1-1-1V5a1 1 0 0 1 1-1zm1 2v12h10V6H4z",
   kebab: "M12 8a2 2 0 1 0 0-4 2 2 0 0 0 0 4zm0 2a2 2 0 1 0 0 4 2 2 0 0 0 0-4zm0 6a2 2 0 1 0 0 4 2 2 0 0 0 0-4z",
   plus: "M19 13h-6v6h-2v-6H5v-2h6V5h2v6h6v2z",
   minimize: "M5 11.200h14v1.600H5z",
   restore: "M8 4h10a2 2 0 0 1 2 2v10h-1.500V6a.5.5 0 0 0-.5-.5H8zM6 7h9a2 2 0 0 1 2 2v9a2 2 0 0 1-2 2H6a2 2 0 0 1-2-2V9a2 2 0 0 1 2-2zm0 1.500a.5.5 0 0 0-.5.5v9a.5.5 0 0 0 .5.5h9a.5.5 0 0 0 .5-.5V9a.5.5 0 0 0-.5-.5z",
};

const BOOKMARK_FOLDERS = ["MyLearning", "Research", "IELTS", "AWS"];

const App = () => (
   <Shell>
      <GlobalStyle />

      <ChromeTop>
         <TabStrip>
            <TabListBtn>
               <IoChevronDownOutline size={26} />
            </TabListBtn>
            <ActiveTab>
               <Butler h={36} />
               <TabTitle>Manage Roles [Jenkins]</TabTitle>
               <TabClose><IoCloseSharp /></TabClose>
            </ActiveTab>
            <Tab $w={481}>
               <GoogleG />
               <TabTitle $fade>jenkins security role based plug</TabTitle>
               <TabClose><IoCloseSharp /></TabClose>
            </Tab>
            <Tab $w={476}>
               <Butler h={36} />
               <TabTitle>Search Results | Jenkins plugin</TabTitle>
               <TabClose><IoCloseSharp /></TabClose>
            </Tab>
            <NewTab><Mat d={MD_PATHS.plus} size={36} /></NewTab>
            <WindowBtns>
               <WindowBtn><Mat d={MD_PATHS.minimize} size={30} color="#1f1f1f" /></WindowBtn>
               <WindowBtn><Mat d={MD_PATHS.restore} size={28} color="#1f1f1f" /></WindowBtn>
               <WindowBtn><IoCloseSharp size={36} /></WindowBtn>
            </WindowBtns>
         </TabStrip>
         <Toolbar>
            <NavBtn><Mat d={MD_PATHS.back} size={34} /></NavBtn>
            <NavBtn><Mat d={MD_PATHS.forward} size={34} color="#9aa0a6" /></NavBtn>
            <NavBtn><Mat d={MD_PATHS.reload} size={34} /></NavBtn>
            <Omnibox>
               <SecureChip><WarnIcon />Not secure</SecureChip>
               <Url>54.166.237.231:8080/manage/role-strategy/</Url>
               <Mat d={MD_PATHS.star} size={36} />
            </Omnibox>
            <ToolIcons>
               <ToolIcon $w={106}><Mat d={MD_PATHS.puzzle} size={36} /></ToolIcon>
               <ToolSep />
               <ToolIcon $w={106}><Mat d={MD_PATHS.panel} size={36} /></ToolIcon>
            </ToolIcons>
            <ProfilePill><Avatar>S</Avatar>Paused</ProfilePill>
            <ToolIcons>
               <ToolIcon $w={92}><Mat d={MD_PATHS.kebab} size={36} /></ToolIcon>
            </ToolIcons>
         </Toolbar>
      </ChromeTop>

      <Bookmarks>
         <Bookmark><GmailIcon />Gmail</Bookmark>
         <Bookmark><YouTubeIcon />YouTube</Bookmark>
         <Bookmark><MapsIcon />Maps</Bookmark>
         {BOOKMARK_FOLDERS.map((name) => (
            <Bookmark key={name}><Mat d={MD_PATHS.folder} size={36} />{name}</Bookmark>
         ))}
      </Bookmarks>

      <Viewport>
         <Page>
            <JenkinsBar>
               <Brand><Butler h={80} />Jenkins</Brand>
               <SearchBox>
                  <IoSearchOutline size={30} />
                  <SearchText>Search (CTRL+K)</SearchText>
                  <IoHelpCircleOutline size={44} color="#6d6b85" />
               </SearchBox>
               <HeaderGroup $ml={42} $gap={7}>
                  <IoNotificationsOutline size={46} />
                  <CountBadge $bg="#f59b13">1</CountBadge>
               </HeaderGroup>
               <HeaderGroup $ml={35}>
                  <ShieldAlert />
                  <CountBadge $bg="#d1304a">1</CountBadge>
               </HeaderGroup>
               <HeaderGroup $ml={28}>
                  <IoPersonCircleOutline size={48} />
                  <span>Sathya</span>
                  <ChevronSlot><IoChevronDownOutline size={22} /></ChevronSlot>
               </HeaderGroup>
               <HeaderGroup $ml={36}>
                  <IoLogOutOutline size={48} />
                  <span>log out</span>
               </HeaderGroup>
            </JenkinsBar>

            <Breadcrumbs>
               Dashboard
               <CrumbSep $w={64}><IoChevronForwardOutline size={24} /></CrumbSep>
               Manage Jenkins
               <CrumbSep $w={66}><IoChevronForwardOutline size={24} /></CrumbSep>
               Manage and Assign Roles
               <CrumbSep $w={71}><IoChevronForwardOutline size={24} /></CrumbSep>
               Manage Roles
            </Breadcrumbs>

            <Body>
               <Sidebar>
                  <SideItem $active><IoFingerPrintOutline size={42} />Manage Roles</SideItem>
                  <SideItem><IoPeopleOutline size={42} />Assign Roles</SideItem>
                  <SideItem><BracesIcon />Permission Templates</SideItem>
                  <SideItem><IoExtensionPuzzleOutline size={42} />Role Strategy Macros</SideItem>
               </Sidebar>

               <Main>
                  <Title>Manage Roles</Title>
                  <SectionTitle $mt={55}>Global roles</SectionTitle>

                  <RoleTable>
                     <colgroup>
                        <col width="44" />
                        <col width="91" />
                        {GLOBAL_PERMS.map((p, i) => (
                           <col key={i} width={i === GLOBAL_PERMS.length - 1 ? 71 : 58} />
                        ))}
                        <col width="44" />
                     </colgroup>
                     <thead>
                        <tr>
                           <NoBorderCell rowSpan={2} />
                           <GroupCell rowSpan={2}>Role</GroupCell>
                           {GLOBAL_GROUPS.map(([name, perms]) => (
                              <GroupCell key={name} colSpan={perms.length}>{name}</GroupCell>
                           ))}
                           <NoBorderCell rowSpan={2} />
                        </tr>
                        <tr>
                           {GLOBAL_PERMS.map((p, i) => (
                              <PermCell key={i} $h={213}><PermLabel>{p}</PermLabel></PermCell>
                           ))}
                        </tr>
                     </thead>
                     <tbody>
                        <tr>
                           <NoBorderCell><TrashWrap><TrashIcon /></TrashWrap></NoBorderCell>
                           <NameCell>admin</NameCell>
                           {GLOBAL_PERMS.map((p, i) => (
                              <CheckCell key={i}>
                                 <Checkbox $checked={i === 0}>
                                    {i === 0 && <IoCheckmarkSharp size={30} />}
                                 </Checkbox>
                              </CheckCell>
                           ))}
                           <NoBorderCell><TrashWrap $right><TrashIcon /></TrashWrap></NoBorderCell>
                        </tr>
                     </tbody>
                  </RoleTable>

                  <FieldLabel htmlFor="role-to-add">Role to add</FieldLabel>
                  <TextInput id="role-to-add" />
                  <AddButton>Add</AddButton>
                  <Divider />

                  <SectionTitle $mt={61}>Item roles</SectionTitle>

                  <RoleTable $left={11}>
                     <colgroup>
                        <col width="68" />
                        <col width="101" />
                        <col width="126" />
                        {ITEM_PERMS.map((p, i) => (
                           <col key={i} width={i === ITEM_PERMS.length - 1 ? 72 : 56} />
                        ))}
                     </colgroup>
                     <thead>
                        <tr>
                           <GroupCell rowSpan={2}>Role</GroupCell>
                           <GroupCell rowSpan={2}>Pattern</GroupCell>
                           <GroupCell rowSpan={2}>Template</GroupCell>
                           {ITEM_GROUPS.map(([name, perms]) => (
                              <GroupCell key={name} colSpan={perms.length}>{name}</GroupCell>
                           ))}
                        </tr>
                        <tr>
                           {ITEM_PERMS.map((p, i) => (
                              <PermCell key={i} $h={219}><PermLabel>{p}</PermLabel></PermCell>
                           ))}
                        </tr>
                     </thead>
                  </RoleTable>
               </Main>
            </Body>

            <Tooltip>This permission allows users to create new views.</Tooltip>

            <SaveBar>
               <BarButton $primary>Save</BarButton>
               <BarButton>Apply</BarButton>
            </SaveBar>
         </Page>

         <Scrollbar>
            <ScrollArrow />
            <ScrollThumb />
            <ScrollRest />
            <ScrollArrow $down />
         </Scrollbar>
      </Viewport>

      <Taskbar>
         <Weather>
            <WeatherIcon />
            <WeatherText>
               26°C
               <WeatherSub>Partly sunny</WeatherSub>
            </WeatherText>
         </Weather>
         <WinLogo />
         <TaskSearch>
            <IoSearchOutline size={36} color="#222" />
            <TaskSearchText>Search</TaskSearchText>
            <SearchArt />
         </TaskSearch>
         <TaskIcons>
            <TaskIcon><StackIcon /></TaskIcon>
            <TaskIcon><ChatIcon /><TaskBadge>1</TaskBadge></TaskIcon>
            <TaskIcon $dot><EdgeIcon /></TaskIcon>
            <TaskIcon $dot><FolderIcon /></TaskIcon>
            <TaskIcon $dot><StoreIcon /><TaskBadge>1</TaskBadge></TaskIcon>
            <TaskIcon $dot><DellIcon /></TaskIcon>
            <TaskIcon $active><ChromeIcon /></TaskIcon>
            <TaskIcon $dot><GearIcon /></TaskIcon>
            <TaskIcon $dot><McAfeeIcon /></TaskIcon>
            <TaskIcon $dot><NotepadIcon /></TaskIcon>
            <TaskIcon $dot><ExcelIcon /></TaskIcon>
            <TaskIcon $dot><PuttyIcon /></TaskIcon>
            <TaskIcon $dot><VlcIcon /></TaskIcon>
         </TaskIcons>
         <Tray>
            <TraySlot $w={64}><IoChevronDownOutline size={26} style={{ transform: "rotate(180deg)" }} /></TraySlot>
            <TraySlot $w={62}><CloudIcon /></TraySlot>
            <TraySlot $w={70}><SyncIcon /></TraySlot>
            <TraySlot $w={80} $text>
               <span>ENG</span>
               <span>IN</span>
            </TraySlot>
            <TraySlot $w={65}><WifiIcon /></TraySlot>
            <TraySlot $w={44}><SpeakerIcon /></TraySlot>
            <TraySlot $w={50}><BatteryIcon /></TraySlot>
            <TraySlot $w={148} $align="flex-end" $text>
               <span>18:33</span>
               <span>03-01-2024</span>
            </TraySlot>
            <TraySlot $w={58}><TrayBell /></TraySlot>
         </Tray>
      </Taskbar>
   </Shell>
);

export default App;
